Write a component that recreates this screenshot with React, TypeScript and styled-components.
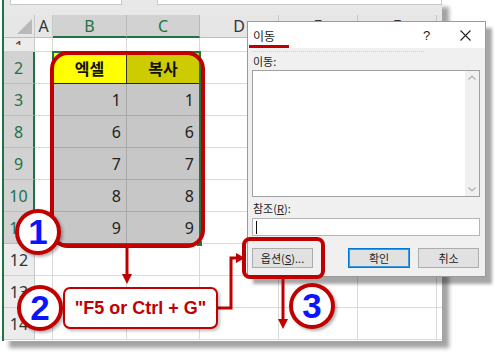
import React from "react";
import styled, { createGlobalStyle, css } from "styled-components";

const RED = "#c00000";
const GREEN = "#217346";

const GlobalStyle = createGlobalStyle`
  html, body { margin: 0; padding: 0; background: #fff; }
  #root { width: 500px; height: 357px; }
`;

const Stage = styled.div`
  position: relative;
  width: 500px;
  height: 357px;
  overflow: hidden;
  background: #fff;
  padding-left: 2px;
  box-sizing: border-box;
  font-family: "Noto Sans", "Noto Sans CJK KR", sans-serif;
`;

/* ---------- spreadsheet ---------- */

const Sheet = styled.div`
  width: 440px;
  height: 341px;
  background: #fff;
  border-left: 2px solid ${GREEN};
  box-sizing: border-box;
  box-shadow: 7px 7px 4px rgba(0, 0, 0, 0.36);
  overflow: hidden;
  display: flex;
  flex-direction: column;
`;

const TopBar = styled.div`
  height: 15px;
  flex: none;
  background: #e8e8e8;
  display: flex;
  align-items: flex-start;
  gap: 35px;
  padding-left: 6px;
`;

const BarBox = styled.div<{ $w?: number }>`
  height: 4px;
  width: ${({ $w }) => ($w ? `${$w}px` : "auto")};
  flex: ${({ $w }) => ($w ? "none" : "1")};
  background: #fff;
  border: 1px solid #c8c8c8;
  border-top: none;
`;

const Grid = styled.div`
  display: grid;
  grid-template-columns: 31px 18px 74px 73px 79px 79px 79px 1fr;
  grid-template-rows: 23px 14px repeat(9, 32px);
`;

const Corner = styled.div`
  grid-row: 1;
  grid-column: 1;
  background: #e6e6e6;
  border-right: 1px solid #c8c8c8;
  border-bottom: 1px solid #bdbdbd;
  box-sizing: border-box;
  display: flex;
  align-items: flex-end;
  justify-content: flex-end;
  padding: 0 2px 3px 0;

  &::after {
    content: "";
    width: 15px;
    height: 15px;
    background: #b9b9b9;
    clip-path: polygon(100% 0, 100% 100%, 0 100%);
  }
`;

const ColHead = styled.div<{ $c: number; $sel?: boolean }>`
  grid-row: 1;
  grid-column: ${({ $c }) => $c};
  box-sizing: border-box;
  display: flex;
  align-items: center;
  justify-content: center;
  font-size: 16px;
  color: #333;
  background: #e6e6e6;
  border-right: 1px solid #c8c8c8;
  border-bottom: 1px solid #bdbdbd;
  ${({ $sel }) =>
    $sel &&
    css`
      background: #d2d2d2;
      color: ${GREEN};
      border-right-color: #b8b8b8;
      border-bottom: 2px solid ${GREEN};
    `}
`;

const RowHead = styled.div<{ $r: number; $sel?: boolean; $clip?: boolean }>`
  grid-row: ${({ $r }) => $r};
  grid-column: 1;
  box-sizing: border-box;
  display: flex;
  align-items: ${({ $clip }) => ($clip ? "flex-start" : "center")};
  justify-content: center;
  overflow: hidden;
  font-size: 16px;
  color: #333;
  background: #ececec;
  border-right: 1px solid #c8c8c8;
  border-bottom: 1px solid #d0d0d0;
  ${({ $sel }) =>
    $sel &&
    css`
      background: #d2d2d2;
      color: ${GREEN};
      border-right: 2px solid ${GREEN};
      border-bottom-color: #bcbcbc;
    `}
`;

const ClippedLabel = styled.span`
  display: block;
  height: 6px;
  overflow: hidden;
  line-height: 16px;
  margin-top: 1px;
  color: #8a2b2b;
`;

type CellKind = "blank" | "yellow" | "olive" | "data";

const Cell = styled.div<{ $r: number; $c: number; $kind: CellKind }>`
  grid-row: ${({ $r }) => $r};
  grid-column: ${({ $c }) => $c};
  box-sizing: border-box;
  display: flex;
  align-items: center;
  justify-content: flex-end;
  padding-right: 5px;
  font-size: 16px;
  color: #222;
  border-right: 1px solid #dadada;
  border-bottom: 1px solid #dadada;
  ${({ $kind }) =>
    $kind === "data" &&
    css`
      background: #c7c7c7;
      border-right-color: #a9a9a9;
      border-bottom-color: #a9a9a9;
    `}
  ${({ $kind }) =>
    ($kind === "yellow" || $kind === "olive") &&
    css`
      justify-content: center;
      padding: 0;
      font-family: "Noto Sans CJK KR", sans-serif;
      font-weight: 700;
      font-size: 16px;
      color: #111;
      background: ${$kind === "yellow" ? "#ffff00" : "#cccc00"};
      border-bottom: 1px solid #222;
      border-right-color: ${$kind === "yellow" ? "#333" : "#cccc00"};
    `}
`;

const Selection = styled.div`
  grid-row: 3 / 9;
  grid-column: 3 / 5;
  border: 2px solid ${GREEN};
  margin: -1px;
  position: relative;
  pointer-events: none;

  &::after {
    content: "";
    position: absolute;
    right: -4px;
    bottom: -4px;
    width: 5px;
    height: 5px;
    background: ${GREEN};
    border: 1px solid #fff;
  }
`;

/* ---------- dialog ---------- */

const Dialog = styled.div`
  position: absolute;
  left: 247px;
  top: 21px;
  width: 239px;
  height: 256px;
  box-sizing: border-box;
  border: 1px solid #9a9a9a;
  background: #f0f0f0;
  box-shadow: 6px 7px 3px rgba(0, 0, 0, 0.35);
  font-family: "Noto Sans CJK KR", "Noto Sans", sans-serif;
  font-size: 11px;
  color: #222;
  display: flex;
  flex-direction: column;
`;

const TitleBar = styled.div`
  position: relative;
  height: 26px;
  flex: none;
  background: #fff;
  display: flex;
  align-items: center;
  padding-left: 5px;

  &::after {
    content: "";
    position: absolute;
    left: 1px;
    bottom: 0;
    width: 40px;
    height: 3px;
    background: ${RED};
  }
`;

const Title = styled.span`
  flex: 1;
  font-size: 12px;
`;

const TitleButton = styled.div<{ $w: number }>`
  width: ${({ $w }) => $w}px;
  height: 100%;
  display: flex;
  align-items: center;
  justify-content: center;
  font-family: "Liberation Sans", sans-serif;
  font-size: 13px;
  color: #222;
`;

const Body = styled.div`
  flex: 1;
  display: flex;
  flex-direction: column;
  padding: 3px 5px 0 4px;
`;

const FocusLine = styled.div`
  width: 172px;
  border-top: 1px dotted #d4d4d4;
`;

const FieldLabel = styled.div<{ $top: number }>`
  margin-top: ${({ $top }) => $top}px;
  height: 15px;
  line-height: 15px;
  padding-left: 1px;
  font-size: 11px;
`;

const ListBox = styled.div`
  margin-top: 1px;
  height: 127px;
  box-sizing: border-box;
  background: #fff;
  border: 1px solid #a0a0a0;
  display: flex;
  justify-content: flex-end;
`;

const ScrollTrack = styled.div`
  width: 14px;
  background: #f0f0f0;
  display: flex;
  flex-direction: column;
  justify-content: space-between;
  align-items: center;
  padding: 4px 0;
`;

const Input = styled.div`
  margin-top: 2px;
  height: 18px;
  box-sizing: border-box;
  background: #fff;
  border: 1px solid #b4b4b4;
  display: flex;
  align-items: center;
  padding-left: 3px;
`;

const Caret = styled.span`
  width: 1px;
  height: 13px;
  background: #111;
`;

const ButtonRow = styled.div`
  margin-top: 12px;
  display: flex;
  align-items: center;
`;

const Button = styled.div<{ $w: number; $gap?: number; $primary?: boolean }>`
  width: ${({ $w }) => $w}px;
  height: 20px;
  margin-left: ${({ $gap }) => $gap ?? 0}px;
  box-sizing: border-box;
  background: #e1e1e1;
  border: 1px solid #adadad;
  display: flex;
  align-items: center;
  justify-content: center;
  font-size: 11px;
  color: #222;
  ${({ $primary }) =>
    $primary &&
    css`
      border-color: #0078d7;
      box-shadow: inset 0 0 0 1px #3d98e3;
    `}
`;

const Mnemonic = styled.span`
  text-decoration: underline;
`;

/* ---------- annotations ---------- */

const Frame = styled.div<{ $x: number; $y: number; $w: number; $h: number; $r: number }>`
  position: absolute;
  left: ${({ $x }) => $x}px;
  top: ${({ $y }) => $y}px;
  width: ${({ $w }) => $w}px;
  height: ${({ $h }) => $h}px;
  box-sizing: border-box;
  border: 4px solid ${RED};
  border-radius: ${({ $r }) => $r}px;
  pointer-events: none;
`;

const Badge = styled.div<{ $x: number; $y: number }>`
  position: absolute;
  left: ${({ $x }) => $x}px;
  top: ${({ $y }) => $y}px;
  width: 46px;
  height: 46px;
  box-sizing: border-box;
  border-radius: 50%;
  border: 4px solid ${RED};
  background: #fff;
  box-shadow: 2px 2px 3px rgba(0, 0, 0, 0.3);
  display: flex;
  align-items: center;
  justify-content: center;
  font-family: "Liberation Sans", Arial, sans-serif;
  font-weight: 700;
  font-size: 35px;
  color: #0a14ff;
`;

const Note = styled.div`
  position: absolute;
  left: 63px;
  top: 287px;
  width: 155px;
  height: 42px;
  box-sizing: border-box;
  border: 2px solid ${RED};
  border-radius: 7px;
  background: #fff;
  box-shadow: 2px 2px 3px rgba(0, 0, 0, 0.25);
  display: flex;
  align-items: center;
  justify-content: center;
  font-family: "Liberation Sans", Arial, sans-serif;
  font-weight: 700;
  font-size: 18px;
  color: ${RED};
`;

const Arrows = styled.svg`
  position: absolute;
  left: 0;
  top: 0;
  pointer-events: none;
`;

const rows = [
  { label: "1", h: "row1", b: "", c: "" },
  { label: "2", h: "head", b: "엑셀", c: "복사" },
  { label: "3", h: "data", b: "1", c: "1" },
  { label: "8", h: "data", b: "6", c: "6" },
  { label: "9", h: "data", b: "7", c: "7" },
  { label: "10", h: "data", b: "8", c: "8" },
  { label: "11", h: "data", b: "9", c: "9" },
  { label: "12", h: "blank", b: "", c: "" },
  { label: "13", h: "blank", b: "", c: "" },
  { label: "14", h: "blank", b: "", c: "" },
];

const cols = ["A", "B", "C", "D", "E", "F", "G"];

const kindOf = (h: string, col: string): CellKind => {
  if (h === "head" && col === "B") return "yellow";
  if (h === "head" && col === "C") return "olive";
  if (h === "data" && (col === "B" || col === "C")) return "data";
  return "blank";
};

const App = () => (
  <Stage>
    <GlobalStyle />
    <Sheet>
      <TopBar>
        <BarBox $w={110} />
        <BarBox />
      </TopBar>
      <Grid>
        <Corner />
        {cols.map((col, i) => (
          <ColHead key={col} $c={i + 2} $sel={col === "B" || col === "C"}>
            {col === "G" ? "" : col}
          </ColHead>
        ))}
        {rows.map((row, r) => {
          const gr = r + 2;
          const sel = row.h === "head" || row.h === "data";
          return (
            <React.Fragment key={row.label}>
              <RowHead $r={gr} $sel={sel} $clip={row.h === "row1"}>
                {row.h === "row1" ? <ClippedLabel>{row.label}</ClippedLabel> : row.label}
              </RowHead>
              {cols.map((col, c) => (
                <Cell key={col} $r={gr} $c={c + 2} $kind={kindOf(row.h, col)}>
                  {col === "B" ? row.b : col === "C" ? row.c : ""}
                </Cell>
              ))}
            </React.Fragment>
          );
        })}
        <Selection />
      </Grid>
    </Sheet>

    <Dialog>
      <TitleBar>
        <Title>이동</Title>
        <TitleButton $w={37}>?</TitleButton>
        <TitleButton $w={40}>
          <svg width="11" height="11" viewBox="0 0 11 11">
            <path d="M0.5 0.5 L10.5 10.5 M10.5 0.5 L0.5 10.5" stroke="#222" strokeWidth="1.1" fill="none" />
          </svg>
        </TitleButton>
      </TitleBar>
      <Body>
        <FocusLine />
        <FieldLabel $top={2}>이동:</FieldLabel>
        <ListBox>
          <ScrollTrack>
            <svg width="8" height="5" viewBox="0 0 8 5">
              <path d="M0.5 4.5 L4 1 L7.5 4.5" stroke="#b0b0b0" strokeWidth="1.2" fill="none" />
            </svg>
            <svg width="8" height="5" viewBox="0 0 8 5">
              <path d="M0.5 0.5 L4 4 L7.5 0.5" stroke="#b0b0b0" strokeWidth="1.2" fill="none" />
            </svg>
          </ScrollTrack>
        </ListBox>
        <FieldLabel $top={4}>
          참조(<Mnemonic>R</Mnemonic>):
        </FieldLabel>
        <Input>
          <Caret />
        </Input>
        <ButtonRow>
          <Button $w={61}>
            옵션(<Mnemonic>S</Mnemonic>)...
          </Button>
          <Button $w={62} $gap={35} $primary>
            확인
          </Button>
          <Button $w={61} $gap={8}>
            취소
          </Button>
        </ButtonRow>
      </Body>
    </Dialog>

    <Frame $x={50} $y={51} $w={155} $h={197} $r={18} />
    <Frame $x={242} $y={237} $w={83} $h={42} $r={8} />

    <Arrows width="500" height="357" viewBox="0 0 500 357">
      <g stroke={RED} strokeWidth="3" fill="none">
        <path d="M127 248 V276" />
        <path d="M218 308 H231 V258 H237" />
        <path d="M283 279 V321" />
      </g>
      <g fill={RED}>
        <path d="M122 274 H132 L127 284 Z" />
        <path d="M236 253 V263 L245 258 Z" />
        <path d="M278 319 H288 L283 329 Z" />
      </g>
    </Arrows>

    <Badge $x={15} $y={209}>1</Badge>
    <Badge $x={17} $y={285}>2</Badge>
    <Badge $x={289} $y={283}>3</Badge>
    <Note>"F5 or Ctrl + G"</Note>
  </Stage>
);

export default App;
